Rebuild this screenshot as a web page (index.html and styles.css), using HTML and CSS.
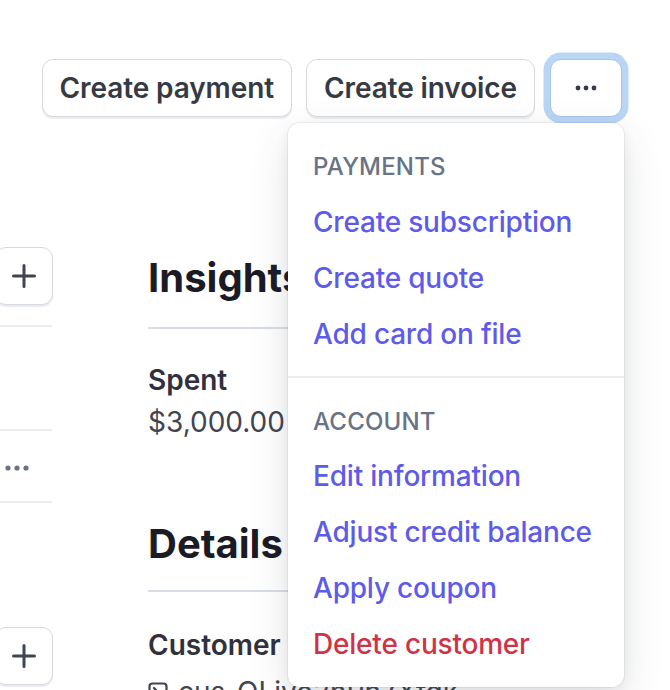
FILE: index.html
```html
<!DOCTYPE html>
<html lang="en">
<head>
<meta charset="utf-8">
<title>Customer</title>
<link rel="stylesheet" href="styles.css">
</head>
<body>
<header class="toolbar">
  <button class="btn">Create payment</button>
  <button class="btn">Create invoice</button>
  <div class="more-wrap">
    <button class="btn btn-more" aria-label="More">
      <svg width="22" height="6" viewBox="0 0 22 6"><circle cx="3" cy="3" r="2.4" fill="#353a44"/><circle cx="11" cy="3" r="2.4" fill="#353a44"/><circle cx="19" cy="3" r="2.4" fill="#353a44"/></svg>
    </button>
    <div class="menu">
      <section class="menu-section">
        <div class="menu-title">PAYMENTS</div>
        <a class="menu-item">Create subscription</a>
        <a class="menu-item">Create quote</a>
        <a class="menu-item">Add card on file</a>
      </section>
      <section class="menu-section menu-section-sep">
        <div class="menu-title">ACCOUNT</div>
        <a class="menu-item">Edit information</a>
        <a class="menu-item">Adjust credit balance</a>
        <a class="menu-item">Apply coupon</a>
        <a class="menu-item danger">Delete customer</a>
      </section>
    </div>
  </div>
</header>
<div class="page">
  <aside class="side">
    <button class="icon-btn first" aria-label="Add">
      <svg width="24" height="24" viewBox="0 0 24 24"><path d="M12 1.5v21M1.5 12h21" stroke="#414552" stroke-width="3" stroke-linecap="round"/></svg>
    </button>
    <div class="side-rule r1"></div>
    <div class="side-rule r2"></div>
    <div class="side-dots">
      <svg width="24" height="6" viewBox="0 0 24 6"><circle cx="3" cy="3" r="2.6" fill="#6a7383"/><circle cx="12" cy="3" r="2.6" fill="#6a7383"/><circle cx="21" cy="3" r="2.6" fill="#6a7383"/></svg>
    </div>
    <div class="side-rule r3"></div>
    <button class="icon-btn second" aria-label="Add">
      <svg width="24" height="24" viewBox="0 0 24 24"><path d="M12 1.5v21M1.5 12h21" stroke="#414552" stroke-width="3" stroke-linecap="round"/></svg>
    </button>
  </aside>
  <main class="main">
    <h2 class="heading h-insights">Insights</h2>
    <div class="rule"></div>
    <div class="label l-spent">Spent</div>
    <div class="value">$3,000.00</div>
    <h2 class="heading h-details">Details</h2>
    <div class="rule"></div>
    <div class="label l-customer">Customer</div>
    <div class="cus-id">
      <svg width="20" height="20" viewBox="0 0 20 20"><rect x="1.5" y="1.5" width="17" height="17" rx="3" fill="none" stroke="#414552" stroke-width="2.2"/><path d="M6 6l4 4-4 4" fill="none" stroke="#414552" stroke-width="2.2" stroke-linecap="round" stroke-linejoin="round"/></svg>
      <span>cus_QLiyo2nPh7Xfgk</span>
    </div>
  </main>
</div>
</body>
</html>
```

FILE: styles.css
```css
* { box-sizing: border-box; }

html, body {
  margin: 0;
  padding: 0;
  background: #ffffff;
  overflow: hidden;
}

body {
  width: 670px;
  height: 690px;
  font-family: Inter, "Noto Sans", "Liberation Sans", sans-serif;
  color: #30313d;
  position: relative;
}

.toolbar {
  display: flex;
  justify-content: flex-end;
  gap: 14px;
  padding: 59px 48px 0 0;
}

.btn {
  height: 58px;
  padding: 0 17px;
  border: 1.5px solid #d5dbe1;
  border-radius: 11px;
  background: #ffffff;
  box-shadow: 0 1.5px 1px rgba(64, 68, 82, 0.1);
  font-family: inherit;
  font-size: 28px;
  font-weight: 600;
  letter-spacing: -0.1px;
  color: #353a44;
  display: flex;
  align-items: center;
  justify-content: center;
  white-space: nowrap;
}

.more-wrap {
  position: relative;
  margin-left: 1px;
}

.btn-more {
  width: 72px;
  padding: 0;
  border-color: #a9c3e3;
  box-shadow: 0 0 0 6.5px #b9d6f6;
}

.menu {
  position: absolute;
  top: 64px;
  right: -2px;
  width: 336px;
  height: 564px;
  background: #ffffff;
  border-radius: 12px;
  box-shadow: 0 0 0 1px rgba(64, 68, 82, 0.07), 0 14px 40px rgba(60, 66, 87, 0.14), 0 4px 14px rgba(0, 0, 0, 0.06);
  z-index: 10;
}

.menu-section {
  padding: 30px 0 14px 25px;
}

.menu-section-sep {
  border-top: 2px solid #ebeef1;
  padding-top: 30px;
}

.menu-title {
  font-size: 24px;
  line-height: 28px;
  font-weight: 500;
  color: #687385;
  letter-spacing: 0.2px;
  margin-bottom: 13px;
}

.menu-section-sep .menu-title {
  margin-bottom: 12px;
}

.menu-item {
  display: block;
  font-size: 28px;
  line-height: 56px;
  font-weight: 500;
  letter-spacing: -0.2px;
  color: #5e5bea;
  white-space: nowrap;
}

.menu-item.danger {
  color: #cf3347;
}

.page {
  display: flex;
}

.side {
  width: 58px;
  margin-left: -5px;
  display: flex;
  flex-direction: column;
  align-items: flex-start;
}

.icon-btn {
  width: 58px;
  height: 58px;
  padding: 0;
  border: 1.5px solid #d5dbe1;
  border-radius: 11px;
  background: #ffffff;
  box-shadow: 0 1.5px 1px rgba(64, 68, 82, 0.1);
  display: flex;
  align-items: center;
  justify-content: center;
}

.icon-btn.first { margin-top: 130px; }
.icon-btn.second { margin-top: 124px; }

.side-rule {
  width: 52px;
  margin-left: 5px;
  height: 2px;
  background: #ebeef1;
}

.side-rule.r1 { margin-top: 20px; }
.side-rule.r2 { margin-top: 102px; }
.side-rule.r3 { margin-top: 0; }

.side-dots {
  margin-left: 10px;
  height: 70px;
  padding-top: 4px;
  display: flex;
  align-items: center;
}

.main {
  margin-left: 95px;
  width: 452px;
}

.heading {
  margin: 0;
  font-size: 40px;
  line-height: 48px;
  font-weight: 700;
  color: #1a1b25;
}

.h-insights { margin-top: 137px; }
.h-details { margin-top: 78px; }

.h-insights + .rule { margin-top: 25px; }
.h-details + .rule { margin-top: 22px; }

.rule {
  height: 2px;
  background: #d8dde3;
}

.label {
  font-size: 28px;
  line-height: 40px;
  font-weight: 600;
  color: #30313d;
}

.l-spent { margin-top: 31px; }
.l-customer { margin-top: 33px; }

.value {
  font-size: 28px;
  line-height: 40px;
  font-weight: 400;
  color: #414552;
  margin-top: 2px;
}

.cus-id {
  display: flex;
  align-items: center;
  gap: 10px;
  margin-top: 7px;
  font-size: 28px;
  line-height: 40px;
  color: #414552;
  white-space: nowrap;
}
```
